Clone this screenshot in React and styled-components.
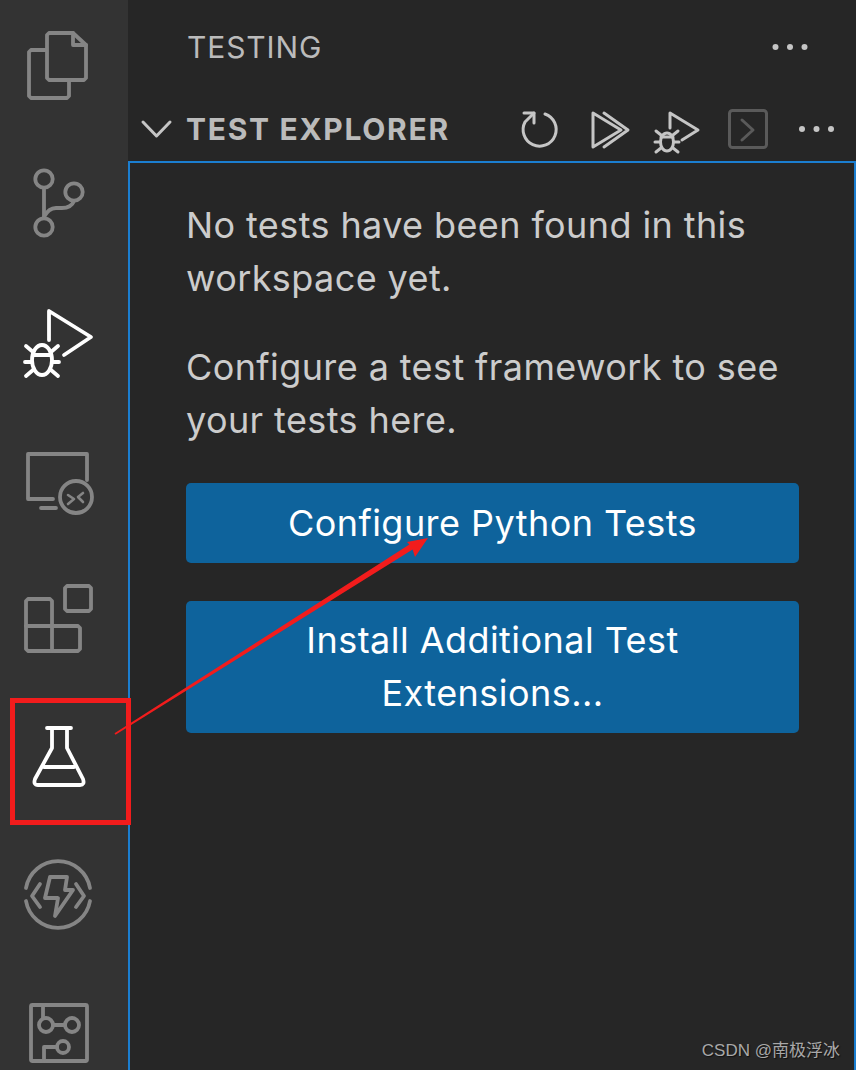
import styled, { createGlobalStyle } from "styled-components";

const GlobalStyle = createGlobalStyle`
  html, body {
    margin: 0;
    padding: 0;
    background: #262626;
  }
  #root {
    height: 1070px;
  }
`;

const Page = styled.div`
  position: relative;
  display: grid;
  grid-template-columns: 128px 1fr;
  width: 856px;
  height: 1070px;
  overflow: hidden;
  font-family: Inter, "Noto Sans", sans-serif;
`;

const ActivityBar = styled.nav`
  display: flex;
  flex-direction: column;
  align-items: center;
  gap: 67px;
  padding-top: 29px;
  background: #333333;
`;

const Icon = styled.svg`
  display: block;
  width: ${(p) => p.$size}px;
  height: ${(p) => p.$size}px;
  flex: none;
  overflow: visible;
  fill: none;
  stroke: ${(p) => p.$color};
  stroke-width: ${(p) => p.$stroke}px;
  stroke-linecap: round;
  stroke-linejoin: round;
`;

const BarIcon = ({ top, active, children }) => (
  <Icon
    viewBox={`28 ${top} 72 72`}
    $size={72}
    $stroke={3.8}
    $color={active ? "#ffffff" : "#858585"}
  >
    {children}
  </Icon>
);

const Sidebar = styled.main`
  display: flex;
  flex-direction: column;
  min-width: 0;
  background: #262626;
`;

const TitleRow = styled.header`
  display: flex;
  align-items: center;
  justify-content: space-between;
  height: 94px;
  padding: 0 44px 0 59px;
`;

const ViewTitle = styled.h1`
  margin: 0;
  font-size: 30px;
  font-weight: 400;
  letter-spacing: 0.9px;
  color: #bbbbbb;
`;

const SectionRow = styled.div`
  display: flex;
  align-items: center;
  height: 64px;
  margin-top: 3px;
  padding: 0 18px 0 14px;
`;

const SectionTitle = styled.h2`
  margin: 0 0 0 14px;
  font-size: 30px;
  font-weight: 700;
  letter-spacing: 1.7px;
  color: #bbbbbb;
`;

const Actions = styled.div`
  display: flex;
  gap: 25px;
  margin-left: auto;
`;

const ActionIcon = ({ left, muted, children }) => (
  <Icon
    viewBox={`${left} 107 44 44`}
    $size={44}
    $stroke={3}
    $color={muted ? "#5a5a5a" : "#c5c5c5"}
  >
    {children}
  </Icon>
);

const Panel = styled.section`
  flex: 1;
  padding: 36px 55px 0 56px;
  border: solid #1b7ed0;
  border-width: 2px 2px 0 2px;
`;

const Message = styled.p`
  margin: 0 0 36px;
  font-size: 36px;
  line-height: 53px;
  letter-spacing: 0.4px;
  color: #cccccc;

  & + button {
    margin-top: 36px;
  }
`;

const ActionButton = styled.button`
  display: block;
  width: 100%;
  margin-bottom: 38px;
  padding: 13.5px 30px;
  border: 0;
  border-radius: 5px;
  background: #0e639c;
  color: #ffffff;
  font-family: inherit;
  font-size: 36px;
  line-height: 52.5px;
  letter-spacing: 0.45px;
  text-align: center;
`;

const Highlight = styled.div`
  position: absolute;
  left: 10px;
  top: 698px;
  width: 121px;
  height: 127px;
  box-sizing: border-box;
  border: 5px solid #f21c1c;
`;

const Arrow = styled.svg`
  position: absolute;
  left: 0;
  top: 0;
  width: 856px;
  height: 1070px;
  pointer-events: none;
`;

const Watermark = styled.span`
  position: absolute;
  right: 16px;
  top: 1040px;
  font-family: "Liberation Sans", "Noto Sans CJK SC", sans-serif;
  font-size: 17px;
  line-height: 22px;
  color: #a8a8a8;
  text-shadow: 1px 1px 1px #111111;
`;

const Dots = ({ cx, cy, color }) => (
  <g fill={color} stroke="none">
    <circle cx={cx - 14.5} cy={cy} r="3" />
    <circle cx={cx} cy={cy} r="3" />
    <circle cx={cx + 14.5} cy={cy} r="3" />
  </g>
);

export default function App() {
  return (
    <Page>
      <GlobalStyle />
      <ActivityBar>
        <BarIcon top={29}>
          <path d="M49 33H73L86 45V78L84 80H49L47 78V35Z" />
          <path d="M73 33V45H86" />
          <path d="M46 50H31L29 52V96L31 98H67L69 96V81" />
        </BarIcon>
        <BarIcon top={168}>
          <circle cx="44" cy="179" r="8.7" />
          <circle cx="74" cy="192" r="8.7" />
          <circle cx="44" cy="227" r="8.7" />
          <path d="M44 188V218" />
          <path d="M44 217C47 211 50 208 56 208H62C68 208 72 206 74 201" />
        </BarIcon>
        <BarIcon top={307} active>
          <path d="M49 340V311L91 337L64 355" />
          <ellipse cx="42" cy="360" rx="10" ry="15" />
          <path d="M33 355H51M26 346L33 352M58 346L51 352M25 362H32M52 362H59M26 376L33 370M58 376L51 370" />
        </BarIcon>
        <BarIcon top={446}>
          <path d="M53 499H28V454H87V480" />
          <path d="M41 508H56" />
          <circle cx="76" cy="497" r="16" />
          <path d="M68 495L74 499L68 504M83 493L78 497L83 502" strokeWidth="2.6" />
        </BarIcon>
        <BarIcon top={585}>
          <path d="M67 586H89L91 588V609L89 611H67L65 609V588Z" />
          <path d="M28 599H50L52 601V626H78L80 628V649L78 651H28L26 649V601Z" />
          <path d="M26 626H52V651" />
        </BarIcon>
        <BarIcon top={724} active>
          <path d="M47 728H71M52 728V748L35 779Q33 785 38 785H80Q85 785 83 779L67 748V728" />
          <path d="M44 767H74" />
        </BarIcon>
        <BarIcon top={863}>
          <path d="M26 888A32.5 32.5 0 0 1 90 888M26 901A32.5 32.5 0 0 0 90 901" />
          <path d="M40 884L32 896L40 907M76 884L84 896L76 907" />
          <path d="M50 877H67L65 890H73L55 916L58 898H45Z" />
        </BarIcon>
        <BarIcon top={1002}>
          <rect x="31" y="1005" width="56" height="56" rx="1.5" />
          <path d="M43 1005V1018M53 1025H65M57 1047H44V1061" />
          <circle cx="46" cy="1025" r="7" />
          <circle cx="72" cy="1025" r="7" />
          <circle cx="63" cy="1047" r="6" />
        </BarIcon>
      </ActivityBar>

      <Sidebar>
        <TitleRow>
          <ViewTitle>TESTING</ViewTitle>
          <Icon viewBox="768 25 44 44" $size={44} $stroke={0} $color="none">
            <Dots cx={790} cy={47} color="#c5c5c5" />
          </Icon>
        </TitleRow>
        <SectionRow>
          <Icon viewBox="143 115 30 30" $size={30} $stroke={3} $color="#c5c5c5">
            <path d="M144 123L157.500 137L171 123" />
          </Icon>
          <SectionTitle>TEST EXPLORER</SectionTitle>
          <Actions>
            <ActionIcon left={518}>
              <path d="M545 114A16.500 16.500 0 1 1 525 122L534 113" />
              <path d="M524 113H534V123" />
            </ActionIcon>
            <ActionIcon left={587}>
              <path d="M593 113V147L621 130Z" />
              <path d="M604 113L628 130L604 147" />
            </ActionIcon>
            <ActionIcon left={656}>
              <path d="M670 128V113L698 130L682 140" />
              <ellipse cx="667" cy="142" rx="6.500" ry="9" />
              <path d="M661 137H673M656 131L661 135M678 131L673 135M655 142H660M674 142H679M656 152L661 148M678 152L673 148" />
            </ActionIcon>
            <ActionIcon left={725} muted>
              <rect x="729.500" y="110.500" width="37" height="37" rx="3" />
              <path d="M742 120L753 130L742 140" />
            </ActionIcon>
            <Icon viewBox="794 107 44 44" $size={44} $stroke={0} $color="none">
              <Dots cx={816.500} cy={129} color="#c5c5c5" />
            </Icon>
          </Actions>
        </SectionRow>
        <Panel>
          <Message>No tests have been found in this workspace yet.</Message>
          <Message>Configure a test framework to see your tests here.</Message>
          <ActionButton>Configure Python Tests</ActionButton>
          <ActionButton>Install Additional Test Extensions...</ActionButton>
        </Panel>
      </Sidebar>

      <Highlight />
      <Arrow viewBox="0 0 856 1070">
        <polygon
          points="114.500,733.200 409.400,544.500 407,542 428,538 415,557 412.600,549.500 115.500,734.800"
          fill="#f21c1c"
        />
      </Arrow>
      <Watermark>CSDN @南极浮冰</Watermark>
    </Page>
  );
}
